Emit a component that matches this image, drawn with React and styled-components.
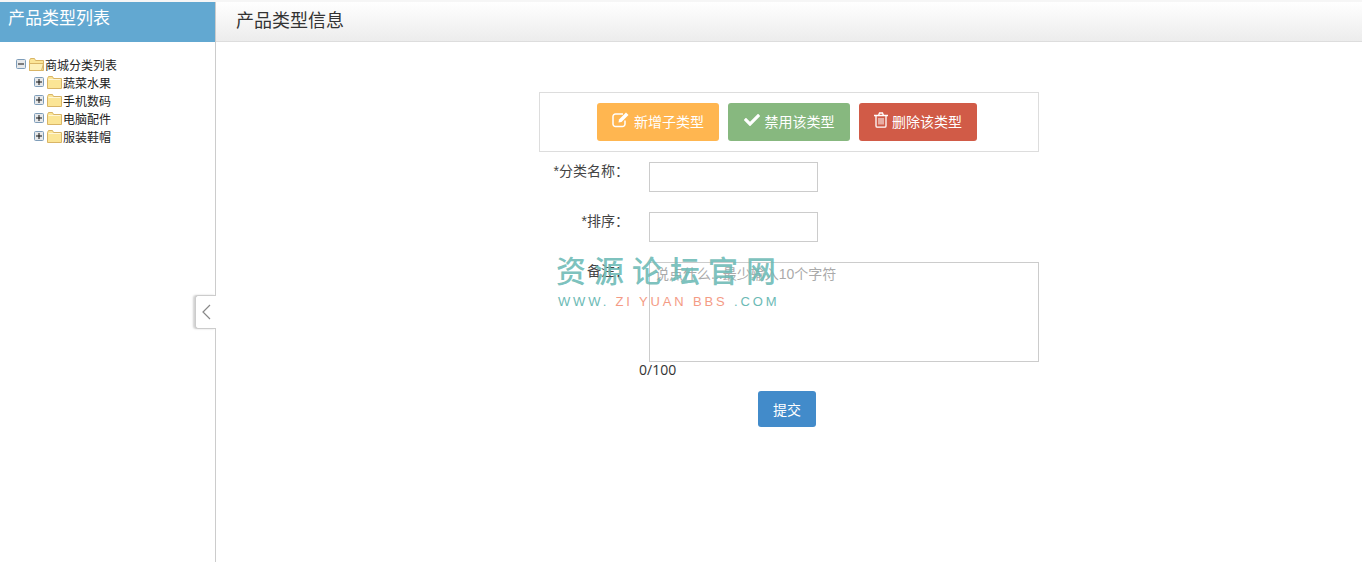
import React from "react";
import styled, { createGlobalStyle } from "styled-components";
import { FaCheck } from "react-icons/fa";

const CJK = `"Liberation Sans", "Noto Sans CJK SC", sans-serif`;

const GlobalStyle = createGlobalStyle`
    html, body {
        margin: 0;
        height: 100%;
        background: #fff;
        font-family: ${CJK};
        font-size: 13px;
        color: #333;
    }
    * {
        box-sizing: border-box;
    }
`;

const Page = styled.div`
    display: flex;
    height: 562px;
    padding-top: 2px;
    background: #f6f6f6;
    overflow: hidden;
`;

const Sidebar = styled.aside`
    position: relative;
    flex: 0 0 216px;
    background: #fff;
    border-right: 1px solid #ccc;
`;

const SidebarTitle = styled.h2`
    margin: 0;
    height: 40px;
    padding: 5px 8px 0;
    background: #62a8d1;
    color: #fff;
    font-size: 17px;
    font-weight: 400;
    line-height: 24px;
`;

const Tree = styled.ul`
    margin: 0;
    padding: 13px 0 0 16px;
    list-style: none;
`;

const SubTree = styled.ul`
    margin: 0;
    padding: 0 0 0 18px;
    list-style: none;
`;

const TreeRow = styled.div`
    display: flex;
    align-items: center;
    height: 18px;
    color: #222;
    font-size: 12px;
    white-space: nowrap;
`;

const Toggle = styled.button`
    position: absolute;
    top: 293px;
    right: -1px;
    width: 21px;
    height: 34px;
    padding: 0;
    display: flex;
    align-items: center;
    justify-content: center;
    background: #fff;
    border: 1px solid #ccc;
    border-right: 0;
    border-radius: 3px 0 0 3px;
    box-shadow: -2px 0 2px rgba(0, 0, 0, 0.18);
`;

const Main = styled.main`
    flex: 1;
    background: #fff;
`;

const MainHeader = styled.header`
    height: 40px;
    padding: 7px 20px 0;
    background: linear-gradient(to bottom, #fff 0%, #ececec 100%);
    border-bottom: 1px solid #ddd;
    color: #333;
    font-size: 18px;
    line-height: 24px;
`;

const FormPanel = styled.div`
    position: relative;
    width: 500px;
    margin: 50px auto 0;
`;

const Toolbar = styled.div`
    display: flex;
    justify-content: center;
    align-items: center;
    gap: 9px;
    height: 60px;
    padding-right: 4px;
    border: 1px solid #ddd;
`;

const ActionButton = styled.button`
    display: flex;
    align-items: center;
    justify-content: center;
    gap: ${props => props.$gap}px;
    width: ${props => props.$width}px;
    height: 38px;
    padding: 0 0 3px;
    border: 0;
    border-radius: 3px;
    background: ${props => props.$color};
    color: #fff;
    font-family: inherit;
    font-size: 14px;

    svg {
        margin-bottom: 2px;
    }
`;

const Field = styled.div`
    display: flex;
    margin-top: ${props => props.$top}px;
`;

const Label = styled.label`
    flex: 0 0 90px;
    color: #444;
    font-size: 14px;
    line-height: 18px;
    text-align: right;
    white-space: nowrap;
`;

const TextInput = styled.input`
    width: 169px;
    height: 30px;
    margin-left: 20px;
    border: 1px solid #ccc;
    background: #fff;
`;

const TextArea = styled.textarea`
    display: block;
    width: 390px;
    height: 100px;
    margin-left: 20px;
    padding: 0 5px;
    border: 1px solid #ccc;
    font-family: inherit;
    font-size: 14px;
    resize: none;

    &::placeholder {
        color: #aaa;
    }
`;

const Counter = styled.div`
    margin: 0 0 0 100px;
    color: #333;
    font-family: "Open Sans", sans-serif;
    font-size: 14px;
    line-height: 15px;
`;

const Submit = styled.button`
    display: block;
    width: 58px;
    height: 36px;
    margin: 14px 0 0 219px;
    border: 0;
    border-radius: 3px;
    background: #428bca;
    color: #fff;
    font-family: inherit;
    font-size: 14px;
`;

const Watermark = styled.div`
    position: absolute;
    left: 17px;
    top: 161px;
    width: 230px;
    pointer-events: none;
`;

const WatermarkTitle = styled.div`
    color: rgba(108, 186, 181, 0.9);
    font-size: 30px;
    font-weight: 500;
    line-height: 38px;
    letter-spacing: 8px;
    white-space: nowrap;
`;

const WatermarkUrl = styled.div`
    margin-top: 3px;
    padding-left: 2px;
    color: rgb(108, 186, 181);
    font-size: 13px;
    line-height: 16px;
    letter-spacing: 2.85px;
    white-space: nowrap;
`;

const UrlAccent = styled.span`
    color: #f49b85;
`;

const ExpandBox = ({ open }) => (
    <svg width="10" height="10" viewBox="0 0 10 10" style={{ flex: "none" }}>
        <rect x="0.5" y="0.5" width="9" height="9" rx="1" fill="#e6e8ea" stroke="#7e9db9" />
        <path d="M2 5h6" stroke="#111" />
        {!open && <path d="M5 2v6" stroke="#111" />}
    </svg>
);

const Folder = ({ open }) => (
    <svg width="15" height="13" viewBox="0 0 15 13" style={{ margin: "0 1px 0 3px", flex: "none" }}>
        <path d="M.5 2.500 1.500.5h4l1 2h8v10H.5z" fill="#fbe596" stroke="#d9b566" />
        {open ? (
            <path d="M.5 5.500h14l-2 7H.5z" fill="#fdf0b8" stroke="#d9b566" />
        ) : (
            <path d="M1.500 3.500h12" stroke="#fff6d6" />
        )}
    </svg>
);

const EditIcon = () => (
    <svg width="18" height="17" viewBox="0 0 18 17" fill="none" stroke="#fff">
        <path d="M13 9.500V13a2.500 2.500 0 0 1-2.500 2.500h-7A2.500 2.500 0 0 1 1 13V5.500A2.500 2.500 0 0 1 3.500 3H11" strokeWidth="1.500" />
        <path d="M6.500 11.500 7 8.500 14 1.500l2.500 2.500-7 7z" fill="#fff" stroke="none" />
    </svg>
);

const TrashIcon = () => (
    <svg width="14" height="16" viewBox="0 0 14 16" fill="none" stroke="#fff" strokeWidth="1.300">
        <path d="M0 3.500h14M4.500 3.500 5.500 1h3l1 2.500" />
        <path d="M2 3.500V14a1.200 1.200 0 0 0 1.200 1.200h7.600A1.200 1.200 0 0 0 12 14V3.500" />
        <path d="M5 6v6.500M7 6v6.500M9 6v6.500" strokeWidth="1" />
    </svg>
);

const categories = ["蔬菜水果", "手机数码", "电脑配件", "服装鞋帽"];

const App = () => {
    return (
        <Page>
            <GlobalStyle />
            <Sidebar>
                <SidebarTitle>产品类型列表</SidebarTitle>
                <Tree>
                    <li>
                        <TreeRow>
                            <ExpandBox open />
                            <Folder open />
                            商城分类列表
                        </TreeRow>
                        <SubTree>
                            {categories.map(name => (
                                <li key={name}>
                                    <TreeRow>
                                        <ExpandBox />
                                        <Folder />
                                        {name}
                                    </TreeRow>
                                </li>
                            ))}
                        </SubTree>
                    </li>
                </Tree>
                <Toggle aria-label="收起">
                    <svg width="9" height="16" viewBox="0 0 9 16" fill="none" stroke="#888" strokeWidth="1.200">
                        <path d="M8 1 1 8l7 7" />
                    </svg>
                </Toggle>
            </Sidebar>
            <Main>
                <MainHeader>产品类型信息</MainHeader>
                <FormPanel>
                    <Toolbar>
                        <ActionButton $color="#ffb650" $width={122} $gap={4}>
                            <EditIcon />
                            新增子类型
                        </ActionButton>
                        <ActionButton $color="#87b87f" $width={122} $gap={5}>
                            <FaCheck size={16} />
                            禁用该类型
                        </ActionButton>
                        <ActionButton $color="#d15b47" $width={118} $gap={4}>
                            <TrashIcon />
                            删除该类型
                        </ActionButton>
                    </Toolbar>
                    <Field $top={10}>
                        <Label>*分类名称：</Label>
                        <TextInput />
                    </Field>
                    <Field $top={20}>
                        <Label>*排序：</Label>
                        <TextInput />
                    </Field>
                    <Field $top={20}>
                        <Label>备注：</Label>
                        <TextArea placeholder="说点什么...最少输入10个字符" />
                    </Field>
                    <Counter>0/100</Counter>
                    <Submit>提交</Submit>
                    <Watermark>
                        <WatermarkTitle>资源论坛官网</WatermarkTitle>
                        <WatermarkUrl>
                            WWW. <UrlAccent>ZI YUAN BBS</UrlAccent> .COM
                        </WatermarkUrl>
                    </Watermark>
                </FormPanel>
            </Main>
        </Page>
    );
};

export default App;
